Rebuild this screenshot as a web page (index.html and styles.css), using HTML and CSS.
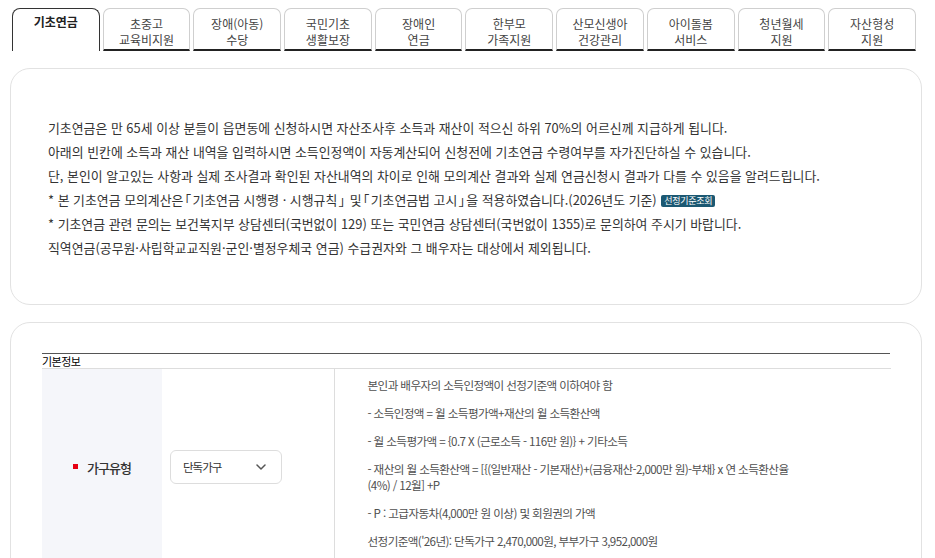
FILE: index.html
```html
<!DOCTYPE html>
<html lang="ko">
<head>
<meta charset="utf-8">
<title>기초연금 모의계산</title>
<link rel="stylesheet" href="styles.css">
</head>
<body>
<div class="page">
  <nav class="tabs">
    <a class="tab active">기초연금</a>
    <a class="tab">초중고<br>교육비지원</a>
    <a class="tab">장애(아동)<br>수당</a>
    <a class="tab">국민기초<br>생활보장</a>
    <a class="tab">장애인<br>연금</a>
    <a class="tab">한부모<br>가족지원</a>
    <a class="tab">산모신생아<br>건강관리</a>
    <a class="tab">아이돌봄<br>서비스</a>
    <a class="tab">청년월세<br>지원</a>
    <a class="tab">자산형성<br>지원</a>
  </nav>

  <section class="card intro">
    <p>기초연금은 만 65세 이상 분들이 읍면동에 신청하시면 자산조사후 소득과 재산이 적으신 하위 70%의 어르신께 지급하게 됩니다.</p>
    <p>아래의 빈칸에 소득과 재산 내역을 입력하시면 소득인정액이 자동계산되어 신청전에 기초연금 수령여부를 자가진단하실 수 있습니다.</p>
    <p>단, 본인이 알고있는 사항과 실제 조사결과 확인된 자산내역의 차이로 인해 모의계산 결과와 실제 연금신청시 결과가 다를 수 있음을 알려드립니다.</p>
    <p>* 본 기초연금 모의계산은<span class="q">「</span>기초연금 시행령 · 시행규칙<span class="q">」</span> 및<span class="q">「</span>기초연금법 고시<span class="q">」</span>을 적용하였습니다.(2026년도 기준) <span class="badge">선정기준조회</span></p>
    <p>* 기초연금 관련 문의는 보건복지부 상담센터(국번없이 129) 또는 국민연금 상담센터(국번없이 1355)로 문의하여 주시기 바랍니다.</p>
    <p>직역연금(공무원·사립학교교직원·군인·별정우체국 연금) 수급권자와 그 배우자는 대상에서 제외됩니다.</p>
  </section>

  <section class="card form">
    <div class="caption">기본정보</div>
    <table class="info">
      <tr>
        <th class="label"><span class="req"></span>가구유형</th>
        <td class="sel-cell">
          <div class="select">
            <span class="sel-text">단독가구</span>
            <svg class="chev" width="10" height="6" viewBox="0 0 10 6"><path d="M1 1 L5 5 L9 1" fill="none" stroke="#555" stroke-width="1.5" stroke-linecap="round" stroke-linejoin="round"/></svg>
          </div>
        </td>
        <td class="desc">
          <p>본인과 배우자의 소득인정액이 선정기준액 이하여야 함</p>
          <p>- 소득인정액 = 월 소득평가액+재산의 월 소득환산액</p>
          <p>- 월 소득평가액 = {0.7 X (근로소득 - 116만 원)} + 기타소득</p>
          <p>- 재산의 월 소득환산액 = [{(일반재산 - 기본재산)+(금융재산-2,000만 원)-부채} x 연 소득환산율 (4%) / 12월] +P</p>
          <p>- P : 고급자동차(4,000만 원 이상) 및 회원권의 가액</p>
          <p>선정기준액('26년): 단독가구 2,470,000원, 부부가구 3,952,000원</p>
        </td>
      </tr>
    </table>
  </section>
</div>
</body>
</html>
```

FILE: styles.css
```css
* { box-sizing: border-box; }

html, body {
  margin: 0;
  padding: 0;
  background: #fff;
}

body {
  font-family: "Noto Sans CJK KR", "Noto Sans", sans-serif;
  color: #333;
}

.page {
  padding: 8px 13px 0 10px;
}

.tabs {
  display: grid;
  grid-template-columns: repeat(10, 1fr);
  column-gap: 3px;
  width: 904px;
  margin-left: 2px;
}

.tab {
  display: block;
  height: 43px;
  border: 1px solid #cfcfcf;
  border-bottom: 2px solid #222;
  border-radius: 7px 7px 0 0;
  padding-top: 7px;
  font-size: 12px;
  line-height: 16px;
  text-align: center;
  color: #444;
  background: #fff;
}

.tab.active {
  border: 1px solid #333;
  border-bottom: none;
  border-radius: 8px 8px 0 0;
  padding-top: 5px;
  font-weight: 700;
  color: #222;
}

.card {
  border: 1px solid #e2e2e2;
  border-radius: 20px;
  background: #fff;
  margin-top: 17px;
}

.intro {
  padding: 47px 37px 44px;
}

.intro p {
  margin: 0;
  font-size: 12.9px;
  line-height: 24px;
  color: #333;
  white-space: nowrap;
}

.q {
  font-feature-settings: "halt" 1;
  padding: 0 1.25px;
}

.badge {
  display: inline-block;
  background: #1b5872;
  color: #fff;
  font-size: 9px;
  line-height: 12px;
  padding: 0 3px;
  border-radius: 2px;
  letter-spacing: -0.3px;
  vertical-align: 1px;
  margin-left: 1px;
}

.form {
  padding: 30px 31px 0;
  height: 260px;
  overflow: hidden;
  border-bottom-left-radius: 0;
  border-bottom-right-radius: 0;
}

.caption {
  border-top: 1px solid #555;
  font-size: 11px;
  line-height: 14px;
  letter-spacing: -0.5px;
  color: #000;
}

.info {
  width: 849px;
  border-collapse: collapse;
  border-top: 1px solid #ddd;
}

.info th,
.info td {
  padding: 0;
  vertical-align: middle;
}

.label {
  width: 120px;
  background: #f5f6fa;
  font-size: 13px;
  font-weight: 500;
  letter-spacing: -1px;
  color: #333;
  text-align: center;
}

.req {
  display: inline-block;
  width: 5px;
  height: 5px;
  background: #e60012;
  margin-right: 9px;
  vertical-align: 4px;
}

.sel-cell {
  width: 172px;
  padding-left: 8px !important;
  border-right: 1px solid #ddd;
}

.select {
  display: flex;
  align-items: center;
  justify-content: space-between;
  width: 112px;
  height: 34px;
  border: 1px solid #ddd;
  border-radius: 6px;
  padding: 0 15px 0 12px;
  background: #fff;
}

.sel-text {
  font-size: 11.5px;
  letter-spacing: -1px;
  color: #333;
}

.chev {
  display: block;
}

.desc {
  padding: 8px 90px 16px 33px !important;
}

.desc p {
  margin: 0 0 12px;
  font-size: 11.6px;
  line-height: 16px;
  letter-spacing: -0.6px;
  color: #505050;
}

.desc p:last-child {
  margin-bottom: 0;
}
```
